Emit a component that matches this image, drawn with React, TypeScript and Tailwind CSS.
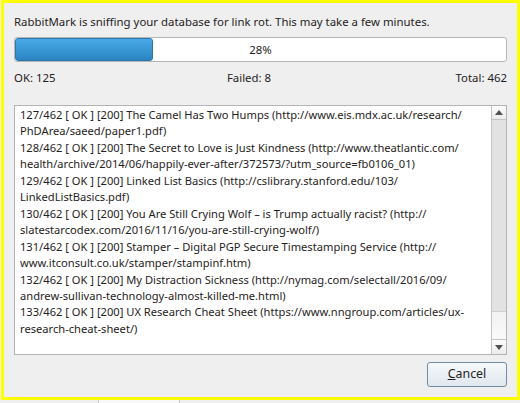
const lines = [
  '127/462 [ OK ] [200] The Camel Has Two Humps (http://www.eis.mdx.ac.uk/research/',
  'PhDArea/saeed/paper1.pdf)',
  '128/462 [ OK ] [200] The Secret to Love is Just Kindness (http://www.theatlantic.com/',
  'health/archive/2014/06/happily-ever-after/372573/?utm_source=fb0106_01)',
  '129/462 [ OK ] [200] Linked List Basics (http://cslibrary.stanford.edu/103/',
  'LinkedListBasics.pdf)',
  '130/462 [ OK ] [200] You Are Still Crying Wolf  \u2013 is Trump actually racist? (http://',
  'slatestarcodex.com/2016/11/16/you-are-still-crying-wolf/)',
  '131/462 [ OK ] [200] Stamper \u2013 Digital PGP Secure Timestamping Service (http://',
  'www.itconsult.co.uk/stamper/stampinf.htm)',
  '132/462 [ OK ] [200] My Distraction Sickness (http://nymag.com/selectall/2016/09/',
  'andrew-sullivan-technology-almost-killed-me.html)',
  '133/462 [ OK ] [200] UX Research Cheat Sheet (https://www.nngroup.com/articles/ux-',
  'research-cheat-sheet/)',
]

function ScrollBar() {
  return (
    <div className="w-[15px] shrink-0 flex flex-col border-l border-[#c4c4c4] bg-[#f4f4f4]">
      <div className="h-[14px] flex items-center justify-center border-b border-[#c4c4c4] bg-gradient-to-b from-[#fcfcfc] to-[#ececec]">
        <svg width="8" height="5" viewBox="0 0 8 5">
          <path d="M0 5 L4 0 L8 5 Z" fill="#505050" />
        </svg>
      </div>
      <div className="flex-1 flex flex-col">
        <div className="h-[192px] bg-[#e2e2e2] border-b border-[#d0d0d0]" />
        <div className="flex-1 bg-gradient-to-b from-[#f2f2f2] to-[#fafafa]" />
      </div>
      <div className="h-[15px] flex items-center justify-center border-t border-[#c4c4c4] bg-gradient-to-b from-[#fcfcfc] to-[#ececec]">
        <svg width="8" height="5" viewBox="0 0 8 5">
          <path d="M0 0 L8 0 L4 5 Z" fill="#505050" />
        </svg>
      </div>
    </div>
  )
}

export default function App() {
  return (
    <div className="w-[520px] h-[403px] bg-[#efefef] font-['Noto_Sans',sans-serif] text-[11.4px] text-[#1f2223] flex flex-col">
      <div className="ml-[1px] h-[400px] border-[3px] border-[#ffff00] flex flex-col px-[10px] pt-[11px]">
        <div className="leading-[16px]">
          RabbitMark is sniffing your database for link rot. This may take a few minutes.
        </div>

        <div className="mt-[7px] h-[25px] relative rounded-[3px] border border-[#b6b6b6] bg-white overflow-hidden">
          <div className="absolute left-0 top-0 bottom-0 w-[138px] rounded-[3px] border border-[#2a76ad] bg-gradient-to-b from-[#48abe8] to-[#2b84c2]" />
          <div className="relative h-full flex items-center justify-center leading-none">28%</div>
        </div>

        <div className="mt-[8px] grid grid-cols-[1fr_auto_1fr] leading-[16px]">
          <span>OK: 125</span>
          <span className="pr-[23px]">Failed: 8</span>
          <span className="text-right">Total: 462</span>
        </div>

        <div className="mt-[19px] h-[250px] flex border border-[#b4b4b4] bg-white">
          <div className="flex-1 pl-[5px] pt-[1px] text-[11.15px] leading-[16.45px] whitespace-nowrap overflow-hidden">
            {lines.map((line, i) => (
              <div key={i}>{line}</div>
            ))}
          </div>
          <ScrollBar />
        </div>

        <div className="mt-[7px] flex justify-end">
          <button className="w-[80px] h-[25px] rounded-[3px] border border-[#6f8ea6] bg-gradient-to-b from-[#f7f9fb] to-[#e0e7ed] text-[12.4px] leading-none">
            <u>C</u>ancel
          </button>
        </div>
      </div>
      <div className="flex-1 flex">
        <div className="w-[99px] border-r border-[#c8c8c8]" />
        <div className="w-[81px] bg-[#f8f8f8] border-r border-[#c8c8c8]" />
      </div>
    </div>
  )
}
